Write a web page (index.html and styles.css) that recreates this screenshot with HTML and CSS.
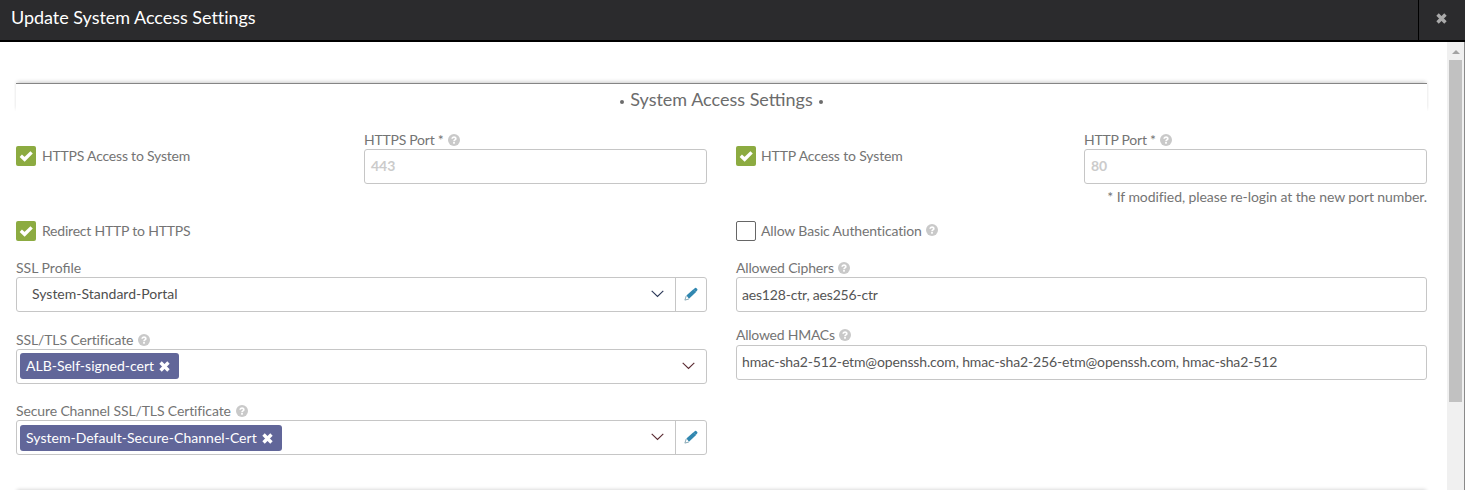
FILE: index.html
```html
<!DOCTYPE html>
<html lang="en">
<head>
<meta charset="utf-8">
<title>Update System Access Settings</title>
<link rel="stylesheet" href="styles.css">
</head>
<body>
<svg class="defs" width="0" height="0" aria-hidden="true">
  <symbol id="help" viewBox="0 0 12 12"><circle cx="6" cy="6" r="6" fill="#c9c9c9"/><path d="M4.1 4.8C4.2 2.6 7.8 2.6 7.8 4.7C7.8 5.9 6 5.8 6 7.2" fill="none" stroke="#fff" stroke-width="1.7"/><rect x="5.1" y="8" width="1.8" height="1.7" fill="#fff"/></symbol>
  <symbol id="check" viewBox="0 0 20 20"><path d="M4.8 9.8L8.6 13.3L15.6 6.4" fill="none" stroke="#fff" stroke-width="3.4"/></symbol>
  <symbol id="cross" viewBox="0 0 10 10"><path d="M1.4 1.4L8.6 8.6M8.6 1.4L1.4 8.6" fill="none" stroke="currentColor" stroke-width="3.1"/></symbol>
  <symbol id="chevron" viewBox="0 0 13 8"><path d="M.7 .9L6.5 6.5L12.3 .9" fill="none" stroke="currentColor" stroke-width="1.15"/></symbol>
  <symbol id="pencil" viewBox="0 0 14 14"><path d="M2.4 8.6L9.4 2.2L12.1 4.9L5 11.8Z" fill="#3187b0"/><path d="M9.4 2.4L11 .9Q11.6 .5 12.2 1L13.2 2Q13.8 2.6 13.3 3.3L11.9 5Z" fill="#3187b0"/><path d="M2.2 9L.9 13.1L4.9 12" fill="none" stroke="#7e9fae" stroke-width=".9"/></symbol>
</svg>
<div class="modal">
  <header class="bar">
    <h1 class="title">Update System Access Settings</h1>
    <div class="close"><svg width="11" height="11"><use href="#cross"/></svg></div>
  </header>
  <div class="viewport">
    <main class="content">
      <section class="section">
        <h2 class="heading"><span class="dot"></span><span>System Access Settings</span><span class="dot"></span></h2>
        <div class="columns">
          <div class="column">
            <div class="port-row">
              <div class="option"><div class="box on"><svg width="20" height="20"><use href="#check"/></svg></div><span class="caption">HTTPS Access to System</span></div>
              <div class="port">
                <div class="label tight"><span>HTTPS Port *</span><svg class="help" width="12" height="12"><use href="#help"/></svg></div>
                <div class="input placeholder"><span>443</span></div>
              </div>
            </div>
            <div class="option"><div class="box on"><svg width="20" height="20"><use href="#check"/></svg></div><span class="caption">Redirect HTTP to HTTPS</span></div>
            <div class="field">
              <div class="label loose"><span>SSL Profile</span></div>
              <div class="input select"><span class="value">System-Standard-Portal</span><svg class="chevron blue" width="13" height="8"><use href="#chevron"/></svg><div class="edit"><svg width="14" height="14"><use href="#pencil"/></svg></div></div>
            </div>
            <div class="field cert">
              <div class="label"><span>SSL/TLS Certificate</span><svg class="help" width="12" height="12"><use href="#help"/></svg></div>
              <div class="input select"><div class="tag"><span>ALB-Self-signed-cert</span><svg width="11" height="11"><use href="#cross"/></svg></div><svg class="chevron red" width="13" height="8"><use href="#chevron"/></svg></div>
            </div>
            <div class="field">
              <div class="label"><span>Secure Channel SSL/TLS Certificate</span><svg class="help" width="12" height="12"><use href="#help"/></svg></div>
              <div class="input select"><div class="tag low"><span>System-Default-Secure-Channel-Cert</span><svg width="11" height="11"><use href="#cross"/></svg></div><svg class="chevron red" width="13" height="8"><use href="#chevron"/></svg><div class="edit"><svg width="14" height="14"><use href="#pencil"/></svg></div></div>
            </div>
          </div>
          <div class="column right">
            <div class="port-row">
              <div class="option"><div class="box on"><svg width="20" height="20"><use href="#check"/></svg></div><span class="caption">HTTP Access to System</span></div>
              <div class="port">
                <div class="label tight"><span>HTTP Port *</span><svg class="help" width="12" height="12"><use href="#help"/></svg></div>
                <div class="input placeholder"><span>80</span></div>
                <p class="note">* If modified, please re-login at the new port number.</p>
              </div>
            </div>
            <div class="option"><div class="box"></div><span class="caption">Allow Basic Authentication</span><svg class="help" width="12" height="12"><use href="#help"/></svg></div>
            <div class="field">
              <div class="label"><span>Allowed Ciphers</span><svg class="help" width="12" height="12"><use href="#help"/></svg></div>
              <div class="input text"><span class="ciphers">aes128-ctr, aes256-ctr</span></div>
            </div>
            <div class="field hmacs">
              <div class="label"><span>Allowed HMACs</span><svg class="help" width="12" height="12"><use href="#help"/></svg></div>
              <div class="input text"><span class="macs">hmac-sha2-512-etm@openssh.com, hmac-sha2-256-etm@openssh.com, hmac-sha2-512</span></div>
            </div>
          </div>
        </div>
      </section>
      <section class="section"><h2 class="heading"></h2></section>
    </main>
    <div class="scrollbar"><div class="arrow"></div><div class="thumb"></div></div>
  </div>
</div>
</body>
</html>
```
FILE: styles.css
```css
* { box-sizing: border-box; }
body { margin: 0; background: #fff; font-family: Lato, sans-serif; font-size: 14px; color: #747474; }
svg { display: block; flex: none; }
.defs { position: absolute; }
.modal { height: 490px; overflow: hidden; display: flex; flex-direction: column; }
.bar { height: 42px; flex: none; display: flex; background: #2b2b2d; border-bottom: 2px solid #000; color: #fff; }
.title { flex: 1; margin: 0; padding: 6px 0 0 11px; font-size: 18px; line-height: 22px; font-weight: 400; letter-spacing: -.03px; white-space: nowrap; }
.close { width: 47px; border-left: 1px solid #000; padding: 13px 0 0 17px; color: #aaa; }

.viewport { flex: 1; display: flex; border-right: 1px solid #8a8a8a; min-height: 0; }
.content { flex: 1; padding: 41px 20px 0 16px; overflow: hidden; }
.section { height: 408px; }
.heading { margin: 0 0 20px; height: 29px; padding-top: 3px; display: flex; justify-content: center; align-items: flex-start; gap: 6px; border-top: 1px solid #858585; box-shadow: 0 -2px 4px -1px rgba(0,0,0,.22); clip-path: inset(-5px -2px 1px -2px); font-size: 18px; line-height: 24px; font-weight: 400; color: #6c6c6c; white-space: nowrap; }
.dot { width: 4px; height: 4px; margin-top: 13px; border-radius: 50%; background: #6c6c6c; }
.columns { display: grid; grid-template-columns: 691px 691px; gap: 29px; }
.column { min-width: 0; }

.port-row { display: flex; height: 89px; }
.port { margin-left: auto; width: 343px; }
.option { display: flex; align-items: center; height: 20px; gap: 6px; letter-spacing: -.21px; white-space: nowrap; }
.right .option { gap: 5px; letter-spacing: -.14px; }
.port-row .option { margin-top: 14px; }
.option .help { margin: -2px 0 0 -1px; }
.caption { padding-bottom: 2px; }
.box { width: 20px; height: 20px; border: 1px solid #666; border-radius: 2px; flex: none; }
.box.on { border: 0; background: #8cab41; }

.field { margin-top: 19px; }
.cert { margin-top: 20px; }
.hmacs { margin-top: 15px; }
.hmacs .label { height: 18px; letter-spacing: -.24px; gap: 4px; }
.label { height: 17px; display: flex; gap: 5px; line-height: 15px; letter-spacing: -.12px; white-space: nowrap; }
.label.loose { letter-spacing: 0; }
.right .label { letter-spacing: -.18px; gap: 4px; }
.right .hmacs .label { letter-spacing: -.24px; }
.label.tight, .right .label.tight { letter-spacing: -.25px; }
.help { margin-top: 2px; }
.input { height: 35px; border: 1px solid #c6c6c6; border-radius: 3px; display: flex; align-items: center; white-space: nowrap; }
.placeholder { padding: 0 0 2px 6px; color: #cbcbcb; font-weight: 700; }
.note { margin: 5px 0 0; line-height: 15px; text-align: right; letter-spacing: -.08px; white-space: nowrap; }
.text { padding: 0 0 1px 5px; color: #555; }
.ciphers { letter-spacing: -.18px; }
.macs { letter-spacing: -.135px; padding-bottom: 1px; }
.value { padding: 0 0 2px 15px; color: #4f4f4f; }
.tag { height: 26px; margin: 0 0 1px 3px; padding: 0 9px 2px 6px; display: flex; align-items: center; gap: 5px; background: #616699; border-radius: 3px; color: #fff; }
.tag svg { margin-top: 2px; }
.tag.low { margin: 1px 0 0 3px; letter-spacing: .03px; }
.chevron { margin: 0 11px 1px auto; }
.blue { color: #2c3858; }
.red { color: #5b2c33; }
.edit { width: 31px; height: 33px; border-left: 1px solid #c6c6c6; display: flex; align-items: center; padding: 0 0 1px 8px; }

.scrollbar { width: 17px; background: #f0f0f0; padding-top: 8px; }
.arrow { width: 0; height: 0; margin: 0 0 6px 5px; border: 4px solid transparent; border-top: 0; border-bottom-color: #a3a3a3; }
.thumb { width: 13px; height: 342px; margin-left: 2px; background: #c1c1c1; }
```
